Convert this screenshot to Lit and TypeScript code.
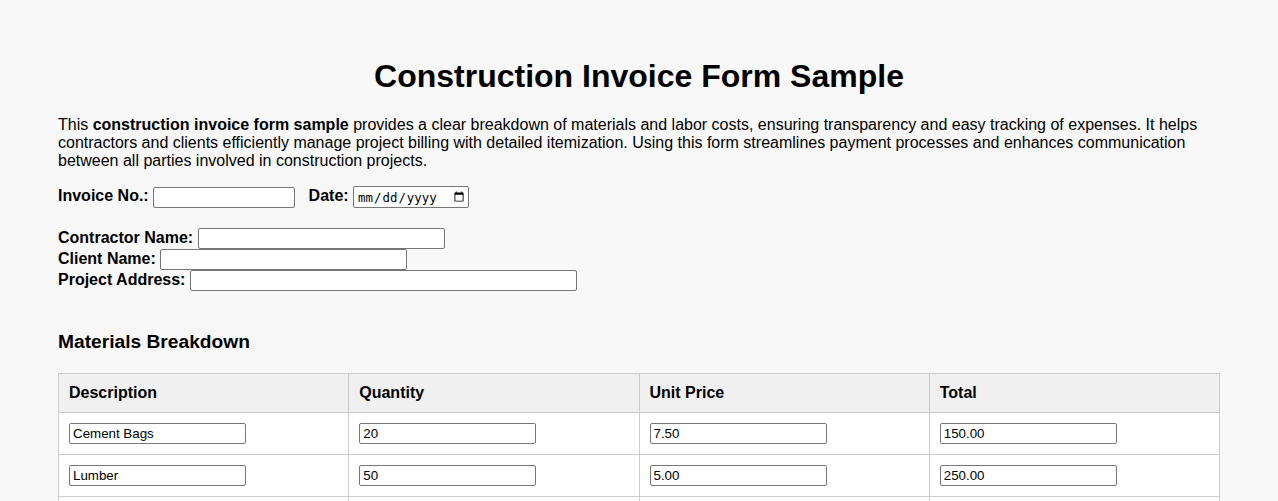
import { LitElement, html, css } from 'lit'
import { customElement } from 'lit/decorators.js'

const materials = [
  { description: 'Cement Bags', quantity: '20', price: '7.50', total: '150.00' },
  { description: 'Lumber', quantity: '50', price: '5.00', total: '250.00' },
  { description: '', quantity: '', price: '', total: '' },
]

@customElement('app-root')
export class AppRoot extends LitElement {
  static styles = css`
    :host {
      display: block;
      height: 100vh;
      overflow: hidden;
      box-sizing: border-box;
      padding: 58px 58px 0;
      background: #f8f8f8;
      color: #000;
      font-family: 'Liberation Sans', Arial, sans-serif;
      font-size: 16px;
      line-height: 18px;
    }
    h1 {
      margin: 0 0 21px;
      font-size: 32px;
      line-height: 37px;
      text-align: center;
    }
    p {
      margin: 0 0 16px;
    }
    label {
      font-weight: bold;
    }
    input {
      box-sizing: border-box;
      height: 21px;
      padding: 1px 3px;
      border: 1px solid #767676;
      border-radius: 2px;
      background: #fff;
      font-family: 'Liberation Sans', Arial, sans-serif;
      font-size: 13.33px;
      color: #000;
    }
    .meta {
      margin-bottom: 20px;
    }
    .meta label {
      vertical-align: 1px;
    }
    .gap {
      margin-left: 9px;
    }
    .invoice-no {
      width: 142px;
    }
    .date {
      width: 116px;
      height: 22px;
      padding-right: 1px;
      font-family: 'DejaVu Sans Mono', monospace;
      font-size: 12.4px;
    }
    .parties div {
      height: 21px;
      line-height: 20px;
    }
    .contractor,
    .client {
      width: 247px;
    }
    .address {
      width: 387px;
    }
    h2 {
      margin: 40px 0 20px;
      font-size: 19.2px;
      line-height: 22px;
    }
    table {
      width: 100%;
      table-layout: fixed;
      border-collapse: collapse;
      background: #fff;
    }
    th,
    td {
      padding: 10px;
      border: 1px solid #ccc;
      text-align: left;
    }
    th {
      background: #f0f0f0;
    }
    td input {
      display: block;
      width: 177px;
    }
  `

  render() {
    return html`
      <h1>Construction Invoice Form Sample</h1>
      <p>
        This <strong>construction invoice form sample</strong> provides a clear breakdown of materials and labor costs,
        ensuring transparency and easy tracking of expenses. It helps contractors and clients efficiently manage project
        billing with detailed itemization. Using this form streamlines payment processes and enhances communication
        between all parties involved in construction projects.
      </p>
      <div class="meta">
        <label>Invoice No.:</label>
        <input class="invoice-no" type="text" />
        <label class="gap">Date:</label>
        <input class="date" type="date" />
      </div>
      <div class="parties">
        <div><label>Contractor Name:</label> <input class="contractor" type="text" /></div>
        <div><label>Client Name:</label> <input class="client" type="text" /></div>
        <div><label>Project Address:</label> <input class="address" type="text" /></div>
      </div>
      <h2>Materials Breakdown</h2>
      <table>
        <thead>
          <tr>
            <th>Description</th>
            <th>Quantity</th>
            <th>Unit Price</th>
            <th>Total</th>
          </tr>
        </thead>
        <tbody>
          ${materials.map(
            (m) => html`
              <tr>
                <td><input type="text" .value=${m.description} /></td>
                <td><input type="text" .value=${m.quantity} /></td>
                <td><input type="text" .value=${m.price} /></td>
                <td><input type="text" .value=${m.total} /></td>
              </tr>
            `
          )}
        </tbody>
      </table>
    `
  }
}
